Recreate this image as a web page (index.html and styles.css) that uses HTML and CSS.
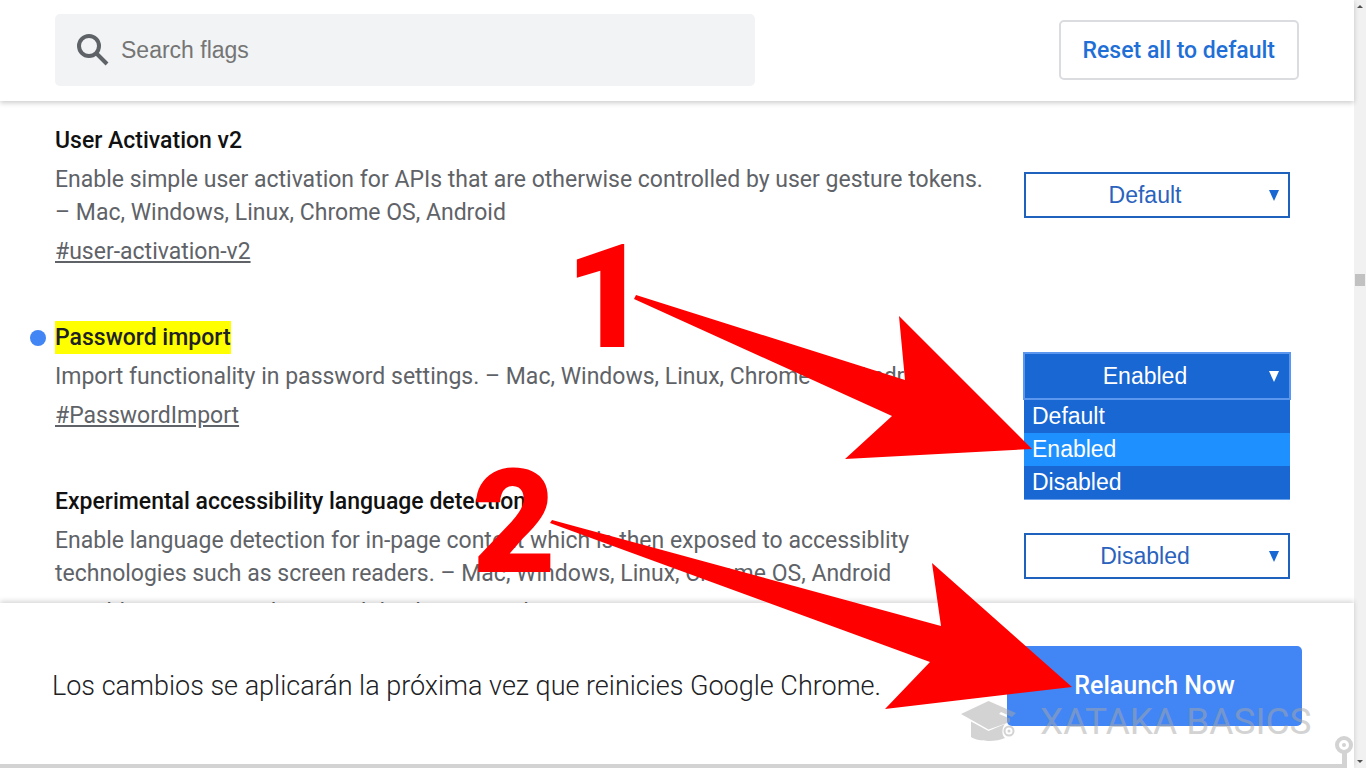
FILE: index.html
```html
<!DOCTYPE html>
<html lang="es">
<head>
  <meta charset="UTF-8" />
  <meta name="viewport" content="width=device-width, initial-scale=1.0" />
  <title>Chrome flags</title>
  <link rel="stylesheet" href="styles.css">
</head>
<body>

  <div class="page">
    <header class="header">
      <label class="search">
        <svg class="search-icon" viewBox="0 0 32 32" aria-hidden="true">
          <circle cx="12" cy="12" r="10" />
          <path d="M19.500 19.500L30 30" />
        </svg>
        <input type="text" placeholder="Search flags" aria-label="Search flags">
      </label>
      <button class="reset" type="button">Reset all to default</button>
    </header>

    <main class="flags">
      <section class="flag">
        <div class="info">
          <h2 id="flag1">User Activation v2</h2>
          <p>Enable simple user activation for APIs that are otherwise controlled by user gesture tokens. – Mac, Windows, Linux, Chrome OS, Android</p>
          <a href="#user-activation-v2">#user-activation-v2</a>
        </div>
        <div class="picker">
          <select aria-labelledby="flag1">
            <option selected>Default</option>
            <option>Enabled</option>
            <option>Disabled</option>
          </select>
        </div>
      </section>

      <section class="flag changed">
        <div class="info">
          <h2 id="flag2"><mark>Password import</mark></h2>
          <p>Import functionality in password settings. – Mac, Windows, Linux, Chrome OS, Android</p>
          <a href="#PasswordImport">#PasswordImport</a>
        </div>
        <div class="picker open">
          <select aria-labelledby="flag2">
            <option>Default</option>
            <option selected>Enabled</option>
            <option>Disabled</option>
          </select>
          <ul class="options">
            <li>Default</li>
            <li class="active">Enabled</li>
            <li>Disabled</li>
          </ul>
        </div>
      </section>

      <section class="flag">
        <div class="info">
          <h2 id="flag3">Experimental accessibility language detection</h2>
          <p>Enable language detection for in-page content which is then exposed to accessiblity technologies such as screen readers. – Mac, Windows, Linux, Chrome OS, Android</p>
          <a href="#enable-experimental-accessibility-language-detection">#enable-experimental-accessibility-language-detection</a>
        </div>
        <div class="picker">
          <select aria-labelledby="flag3">
            <option>Default</option>
            <option>Enabled</option>
            <option selected>Disabled</option>
          </select>
        </div>
      </section>
    </main>

    <footer class="footer">
      <p>Los cambios se aplicarán la próxima vez que reinicies Google Chrome.</p>
      <button class="relaunch" type="button">Relaunch Now</button>
    </footer>
  </div>

  <div class="scrollbar" aria-hidden="true">
    <span class="up"></span>
    <span class="thumb"></span>
    <span class="down"></span>
  </div>

  <svg class="notes" viewBox="0 0 1366 768">
    <!-- watermark -->
    <g class="watermark">
      <path d="M988.500 701L1016 713L1012 717L1001 712L999 714L1010 718.500V722L988.500 729.500L961 714Z" />
      <path d="M971 721.500L988.500 731L1005 724C1002 728 1001 734 1005 738C996 742 979 742 971 737Z" />
      <circle class="ring" cx="1009" cy="731" r="4.500" />
      <circle cx="1009" cy="731" r="1.500" />
      <text x="1040" y="734">XATAKA BASICS</text>
      <path d="M0 764H1342V753H1347V768H0Z" />
      <circle class="ring big" cx="1344" cy="745" r="7" />
      <circle cx="1344" cy="745" r="2" />
    </g>

    <!-- steps -->
    <g class="steps">
      <text x="565" y="347">1</text>
      <text x="472" y="572">2</text>
      <path d="M636 295L905 380L899 316L1032 449L845 459L892 416L634 299Z" />
      <path d="M552 520L941 626L932 563L1072 687L885 709L930 662L550 523Z" />
    </g>
  </svg>

</body>
</html>
```
FILE: styles.css
```css
* {
  box-sizing: border-box;
}
body {
  display: flex;
  position: relative;
  height: 100vh;
  margin: 0;
  overflow: hidden;
  background: #fff;
  color: #202124;
  font-family: Roboto, sans-serif;
  font-size: 23px;
}
h2, p, ul {
  margin: 0;
  padding: 0;
}
.page {
  display: flex;
  flex: 1;
  flex-direction: column;
  min-width: 0;
}

/* top bar */
.header {
  display: flex;
  justify-content: space-between;
  align-items: center;
  gap: 24px;
  padding: 14px 55px 15px;
  background: #fff;
  box-shadow: 0 2px 5px rgba(0, 0, 0, 0.2);
  z-index: 1;
}
.search {
  display: flex;
  align-items: center;
  flex: 0 1 700px;
  gap: 12px;
  height: 72px;
  padding: 0 22px;
  border-radius: 5px;
  background: #f1f3f4;
}
.search-icon {
  width: 32px;
  height: 32px;
  fill: none;
  stroke: #5f6368;
  stroke-width: 4;
}
.search input {
  flex: 1;
  min-width: 0;
  padding: 0;
  border: 0;
  background: none;
  font: 23px "Liberation Sans", sans-serif;
}
.search input::placeholder {
  color: #757575;
}
.reset {
  height: 60px;
  padding: 0 22px;
  border: 2px solid #dadce0;
  border-radius: 5px;
  background: #fff;
  color: #1f6fd6;
  font: 500 23px Roboto, sans-serif;
}

/* list of flags */
.flags {
  flex: 1;
  min-height: 0;
  padding: 23px 64px 0 55px;
  overflow: hidden;
}
.flag {
  display: flex;
  align-items: center;
  justify-content: space-between;
  gap: 24px;
  position: relative;
  margin-bottom: 53px;
}
.info {
  flex: 0 1 940px;
  line-height: 33px;
}
.info h2 {
  margin-bottom: 6px;
  color: #111;
  font-size: 23px;
  font-weight: 500;
}
.info p {
  margin-bottom: 6px;
  color: #5f6368;
}
.info a {
  display: block;
  color: #5f6368;
}
mark {
  display: inline-block;
  background: #ff0;
  color: #202124;
}
.changed::before {
  content: "";
  position: absolute;
  top: 9px;
  left: -25px;
  width: 16px;
  height: 16px;
  border-radius: 50%;
  background: #4285f4;
}
.picker {
  flex: none;
  position: relative;
  width: 266px;
  margin-bottom: 2px;
  font-family: "Liberation Sans", sans-serif;
}
.picker::after {
  content: "";
  position: absolute;
  top: 18px;
  right: 11px;
  border: 5px solid transparent;
  border-top: 11px solid #1967d2;
  border-bottom: 0;
  pointer-events: none;
}
.picker select {
  display: block;
  appearance: none;
  width: 100%;
  height: 46px;
  padding: 0 24px 0 0;
  border: 2px solid #1f62bd;
  border-radius: 0;
  background: #fff;
  color: #2a62bd;
  font: 23px "Liberation Sans", sans-serif;
  text-align: center;
  text-align-last: center;
}
.open select {
  border-color: #1967d2;
  outline: 2px solid #5b97ef;
  outline-offset: -1px;
  background: #1967d2;
  color: #fff;
}
.open::after {
  border-top-color: #fff;
}
.options {
  position: absolute;
  top: 47px;
  left: 0;
  right: 0;
  border-bottom: 1px solid #6ea3ee;
  background: #1967d2;
  color: #fff;
  line-height: 33px;
  list-style: none;
}
.options li {
  padding-left: 8px;
}
.options .active {
  background: #1e90ff;
}

/* relaunch bar */
.footer {
  display: flex;
  align-items: center;
  justify-content: space-between;
  height: 165px;
  padding: 0 52px;
  background: #fff;
  box-shadow: 0 -2px 5px rgba(0, 0, 0, 0.16);
  font-size: 27px;
  font-weight: 350;
  z-index: 1;
}
.relaunch {
  width: 295px;
  height: 80px;
  border: 0;
  border-radius: 5px;
  background: #4285f4;
  color: #fff;
  font: 500 25px Roboto, sans-serif;
}

.scrollbar {
  display: flex;
  flex-direction: column;
  align-items: center;
  width: 12px;
  padding: 5px 0;
  background: #f1f1f1;
}
.up, .down {
  border: 3px solid transparent;
}
.up {
  border-top: 0;
  border-bottom-color: #505050;
}
.down {
  border-bottom: 0;
  border-top-color: #505050;
}
.thumb {
  width: 10px;
  height: 12px;
  margin: 266px 0 auto;
  background: #c1c1c1;
}

/* drawn over the page */
.notes {
  position: absolute;
  top: 0;
  left: 0;
  width: 100%;
  height: 100%;
  pointer-events: none;
  z-index: 2;
}
.steps {
  fill: #f00;
}
.steps text {
  font: 900 145px Roboto, sans-serif;
}
.watermark {
  fill: #a8a8a8;
  opacity: 0.5;
}
.watermark text {
  font: 37px Roboto, sans-serif;
}
.watermark .ring {
  fill: none;
  stroke: #a8a8a8;
  stroke-width: 2;
}
.watermark .big {
  stroke-width: 4;
}
```
